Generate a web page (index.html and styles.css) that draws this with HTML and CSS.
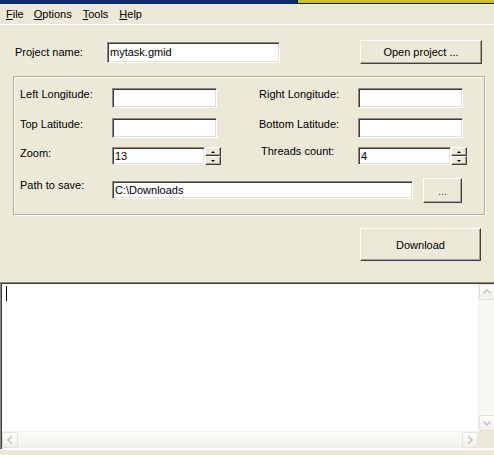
FILE: index.html
```html
<!DOCTYPE html>
<html>
<head>
<meta charset="utf-8">
<title>Downloader</title>
<link rel="stylesheet" href="styles.css">
</head>
<body>
<div class="window">
  <div class="titlestrip"><div class="ts-left"></div><div class="ts-right"></div></div>
  <div class="menubar">
    <span class="menu"><u>F</u>ile</span>
    <span class="menu"><u>O</u>ptions</span>
    <span class="menu"><u>T</u>ools</span>
    <span class="menu"><u>H</u>elp</span>
  </div>
  <div class="content">
    <div class="project-row">
      <span class="label project-label">Project name:</span>
      <div class="edit project-edit">mytask.gmid</div>
      <div class="btn open-btn">Open project ...</div>
    </div>
    <div class="group">
      <div class="grow">
        <span class="label lab-l">Left Longitude:</span>
        <div class="edit ed-l"></div>
        <span class="label lab-r">Right Longitude:</span>
        <div class="edit ed-r"></div>
      </div>
      <div class="grow">
        <span class="label lab-l">Top Latitude:</span>
        <div class="edit ed-l"></div>
        <span class="label lab-r">Bottom Latitude:</span>
        <div class="edit ed-r"></div>
      </div>
      <div class="grow spin-row">
        <span class="label lab-l">Zoom:</span>
        <div class="spin">
          <div class="edit ed-spin">13</div>
          <div class="spin-btns">
            <div class="sbtn"><span class="tri-up"></span></div>
            <div class="sbtn"><span class="tri-down"></span></div>
          </div>
        </div>
        <span class="label lab-r lab-threads">Threads count:</span>
        <div class="spin">
          <div class="edit ed-spin">4</div>
          <div class="spin-btns">
            <div class="sbtn"><span class="tri-up"></span></div>
            <div class="sbtn"><span class="tri-down"></span></div>
          </div>
        </div>
      </div>
      <div class="grow path-row">
        <span class="label lab-l lab-path">Path to save:</span>
        <div class="edit ed-path">C:\Downloads</div>
        <div class="btn dots-btn">...</div>
      </div>
    </div>
    <div class="dl-row"><div class="btn dl-btn">Download</div></div>
  </div>
  <div class="log">
    <div class="log-text"><span class="caret"></span></div>
    <div class="vscroll">
      <div class="sb-btn"><svg width="16" height="16" viewBox="0 0 16 16"><polyline points="4.5,9.5 8,6 11.5,9.5" fill="none" stroke="#c6c4bb" stroke-width="1.6"/></svg></div>
      <div class="sb-track"></div>
      <div class="sb-btn"><svg width="16" height="16" viewBox="0 0 16 16"><polyline points="4.5,6.5 8,10 11.5,6.5" fill="none" stroke="#c6c4bb" stroke-width="1.6"/></svg></div>
    </div>
    <div class="hscroll">
      <div class="sb-btn"><svg width="16" height="16" viewBox="0 0 16 16"><polyline points="9.5,4.5 6,8 9.5,11.5" fill="none" stroke="#c6c4bb" stroke-width="1.6"/></svg></div>
      <div class="sb-track"></div>
      <div class="sb-btn"><svg width="16" height="16" viewBox="0 0 16 16"><polyline points="6.5,4.5 10,8 6.5,11.5" fill="none" stroke="#c6c4bb" stroke-width="1.6"/></svg></div>
    </div>
    <div class="corner"></div>
  </div>
</div>
</body>
</html>
```

FILE: styles.css
```css
* { box-sizing: border-box; }
html, body {
  margin: 0;
  padding: 0;
  background: #ece9d8;
}
body {
  font-family: "Liberation Sans", Arial, sans-serif;
  font-size: 11px;
  color: #000;
}
.window {
  width: 494px;
  height: 455px;
  overflow: hidden;
  background: #ece9d8;
}
.titlestrip {
  display: flex;
  height: 4px;
}
.ts-left {
  width: 297px;
  background: #0c2a6e;
}
.ts-right {
  flex: 1;
  background: #c4c237;
  border-left: 1px solid #1a1a1a;
  border-bottom: 1px solid #1a1a1a;
}
.menubar {
  display: flex;
  align-items: center;
  height: 21px;
  padding-left: 6px;
  gap: 10px;
  border-bottom: 1px solid #fff;
  line-height: 14px;
}
.menu + .menu + .menu { margin-left: 1px; }
.menu u { text-decoration: underline; }

.content {
  display: flex;
  flex-direction: column;
}
.project-row {
  display: flex;
  align-items: center;
  height: 24px;
  margin-top: 15px;
  padding-left: 15px;
}
.label {
  line-height: 14px;
  white-space: nowrap;
}
.project-label { width: 92px; }

.edit {
  height: 20px;
  background: #fff;
  border-top: 1px solid #8c8a80;
  border-left: 1px solid #8c8a80;
  border-right: 1px solid #fff;
  border-bottom: 1px solid #fff;
  box-shadow: inset 1px 1px 0 #3c3c3c, inset -1px -1px 0 #e4e2d6;
  padding: 2px 0 0 2px;
  line-height: 14px;
  white-space: nowrap;
  overflow: hidden;
}
.project-edit { width: 173px; height: 21px; }

.btn {
  display: flex;
  align-items: center;
  justify-content: center;
  background: #ece9d8;
  border-top: 1px solid #fff;
  border-left: 1px solid #fff;
  border-right: 1px solid #404040;
  border-bottom: 1px solid #404040;
  box-shadow: inset -1px -1px 0 #a6a496;
  line-height: 14px;
}
.open-btn {
  width: 122px;
  height: 24px;
  margin-left: 80px;
}

.group {
  margin: 12px 0 0 13px;
  width: 472px;
  height: 139px;
  border: 1px solid #b2af9f;
  box-shadow: 1px 1px 0 #fff, inset 1px 1px 0 #fff;
  padding: 11px 0 0 6px;
  display: flex;
  flex-direction: column;
}
.grow {
  display: flex;
  align-items: flex-start;
  height: 20px;
}
.grow + .grow { margin-top: 10px; }
.spin-row { height: 18px; margin-top: 9px !important; }
.path-row { height: 25px; align-items: center; margin-top: 13px !important; }

.lab-l { width: 92px; margin-top: -1px; }
.lab-r { width: 99px; margin-left: 42px; margin-top: -1px; }
.lab-threads { padding-left: 2px; margin-left: 38px; margin-top: -3px; }
.lab-path { align-self: flex-start; padding-top: 1px; }
.ed-l { width: 105px; }
.ed-r { width: 105px; }

.spin {
  display: flex;
  height: 18px;
}
.ed-spin { width: 93px; height: 18px; padding-top: 1px; }
.spin-btns {
  display: flex;
  flex-direction: column;
  width: 16px;
}
.sbtn {
  height: 9px;
  background: #ece9d8;
  border-top: 1px solid #fff;
  border-left: 1px solid #fff;
  border-right: 1px solid #404040;
  border-bottom: 1px solid #404040;
  box-shadow: inset -1px -1px 0 #a6a496;
  display: flex;
  align-items: center;
  justify-content: center;
}
.tri-up {
  width: 0; height: 0;
  border-left: 2px solid transparent;
  border-right: 2px solid transparent;
  border-bottom: 2px solid #000;
}
.tri-down {
  width: 0; height: 0;
  border-left: 2px solid transparent;
  border-right: 2px solid transparent;
  border-top: 2px solid #000;
}

.ed-path { width: 301px; height: 18px; padding-top: 1px; margin-top: -2px; }
.dots-btn {
  width: 39px;
  height: 25px;
  margin-left: 10px;
  color: #444;
}

.dl-row {
  display: flex;
  justify-content: flex-end;
  margin-top: 13px;
  padding-right: 13px;
}
.dl-btn {
  width: 121px;
  height: 33px;
}

.log {
  margin-top: 21px;
  height: 168px;
  background: #fff;
  border-top: 1px solid #8c8a80;
  border-left: 1px solid #8c8a80;
  border-bottom: 1px solid #fff;
  box-shadow: inset 1px 1px 0 #3c3c3c;
  padding: 1px 0 1px 1px;
  display: grid;
  grid-template-columns: 1fr 16px;
  grid-template-rows: 1fr 17px;
}
.log-text {
  padding: 2px 0 0 4px;
}
.caret {
  display: block;
  width: 1px;
  height: 15px;
  background: #000;
}
.vscroll {
  display: flex;
  flex-direction: column;
  background: #f8f7f2;
  border-left: 1px solid #f0efe8;
}
.hscroll {
  display: flex;
  background: linear-gradient(#fbfbf8, #f1f0ea);
  border-top: 1px solid #f0efe8;
}
.sb-track { flex: 1; }
.sb-btn {
  width: 16px;
  height: 16px;
  flex: none;
  background: linear-gradient(#fdfdfb, #f1f0ea);
  border: 1px solid #e4e2d9;
  border-radius: 2px;
  display: flex;
  align-items: center;
  justify-content: center;
}
.sb-btn svg { display: block; margin: -1px; }
.corner { background: #ece9d8; }
```
